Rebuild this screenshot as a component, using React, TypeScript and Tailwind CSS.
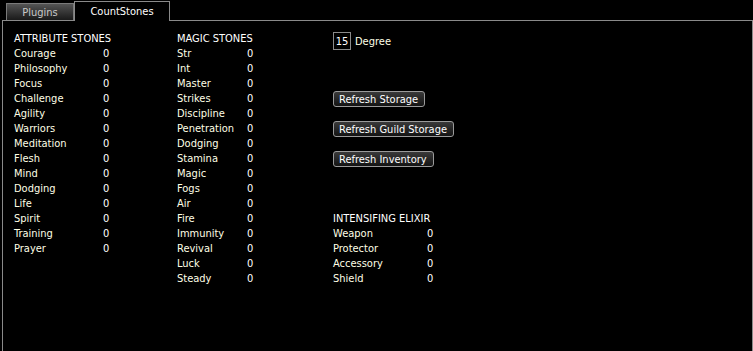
import React from "react";

const attr = ["Courage","Philosophy","Focus","Challenge","Agility","Warriors","Meditation","Flesh","Mind","Dodging","Life","Spirit","Training","Prayer"];
const magic = ["Str","Int","Master","Strikes","Discipline","Penetration","Dodging","Stamina","Magic","Fogs","Air","Fire","Immunity","Revival","Luck","Steady"];
const elixir = ["Weapon","Protector","Accessory","Shield"];

function Row({ label, w }: { label: string; w: string }) {
  return (
    <div className="flex h-[15px] items-center">
      <span className={`${w} text-[#ffffe6]`}>{label}</span>
      <span className="text-white">0</span>
    </div>
  );
}

function Btn({ children }: { children: React.ReactNode }) {
  return (
    <button className="h-[16px] self-start rounded-[3px] border border-[#9a9a9a] bg-gradient-to-b from-[#3a3a3a] to-[#141414] pl-[5px] pr-[6px] leading-[13px] text-white">
      {children}
    </button>
  );
}

export default function App() {
  return (
    <div
      className="h-[351px] w-[753px] overflow-hidden bg-black text-[11px] leading-[15px]"
      style={{ fontFamily: '"DejaVu Sans Condensed", "DejaVu Sans", sans-serif', fontStretch: "semi-condensed" }}
    >
      <div className="relative flex h-[20px] items-end pl-[6px]">
        <div className="flex h-[17px] w-[68px] items-center justify-center border border-b-0 border-[#7a7a7a] bg-gradient-to-b from-[#555555] to-[#1a1a1a] text-[#c8c8c8]">
          Plugins
        </div>
        <div className="relative z-10 -mb-px flex h-[20px] w-[96px] items-center justify-center border border-b-0 border-[#8a8a8a] bg-black text-white">
          CountStones
        </div>
      </div>
      <div className="ml-[2px] h-[331px] w-[751px] border border-b-0 border-[#8a8a8a] pl-[11px] pt-[10px]">
        <div className="flex">
          <div className="w-[163px]">
            <div className="h-[15px] text-white">ATTRIBUTE STONES</div>
            {attr.map((a) => (
              <Row key={a} label={a} w="w-[89px]" />
            ))}
          </div>
          <div className="w-[156px]">
            <div className="h-[15px] text-white">MAGIC STONES</div>
            {magic.map((a) => (
              <Row key={a} label={a} w="w-[70px]" />
            ))}
          </div>
          <div className="flex flex-col">
            <div className="mt-[1px] flex h-[18px] items-center">
              <div className="flex h-[18px] w-[18px] items-center justify-center border border-[#8a8a8a] text-white">15</div>
              <span className="ml-[4px] text-[#ffffe6]">Degree</span>
            </div>
            <div className="mt-[41px] flex flex-col gap-[14px]">
              <Btn>Refresh Storage</Btn>
              <Btn>Refresh Guild Storage</Btn>
              <Btn>Refresh Inventory</Btn>
            </div>
            <div className="mt-[44px]">
              <div className="h-[15px] text-white">INTENSIFING ELIXIR</div>
              {elixir.map((a) => (
                <Row key={a} label={a} w="w-[94px]" />
              ))}
            </div>
          </div>
        </div>
      </div>
    </div>
  );
}
